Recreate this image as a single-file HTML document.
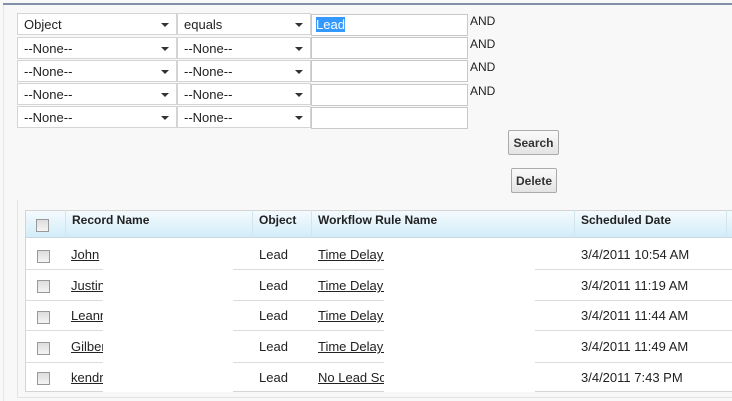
<!DOCTYPE html>
<html><head><style>
*{margin:0;padding:0;box-sizing:border-box}
body{width:732px;height:401px;background:#f8f8f8;font-family:"Liberation Sans",Arial,sans-serif;font-size:13px;color:#222;position:relative;overflow:hidden}
.a{position:absolute}
.sel{position:absolute;background:#fff;border:1px solid #d4d4d4;height:22px;padding:3px 0 0 6px;font-size:13px}
.sel:after{content:"";position:absolute;right:7px;top:9px;border-left:4px solid transparent;border-right:4px solid transparent;border-top:4px solid #333}
.inp{position:absolute;background:#fff;border:1px solid #c8c8c8;height:22px}
.and{position:absolute;left:470px;font-size:12px}
.btn{position:absolute;background:linear-gradient(#fafafa,#e4e4e4);border:1px solid #aaa;border-radius:2px;font-size:12px;font-weight:bold;color:#333;text-align:center;padding-top:5px}
.th{position:absolute;top:210px;height:28px;font-weight:bold;font-size:12px;padding:3px 0 0 6px;border-right:1px solid #d4e4ec}
.cb{position:absolute;width:13px;height:13px;border:1px solid #999;background:linear-gradient(#ddd,#f4f4f4)}
.c{position:absolute;font-size:13px}
.u{text-decoration:underline}
.ln{position:absolute;height:1px;background:#dcdcdc}
</style></head><body>
<div class="a" style="left:3px;top:3px;width:729px;height:2px;background:#8290a8"></div>
<div class="a" style="left:3px;top:5px;width:1px;height:396px;background:#e6e6e6"></div>

<div class="sel" style="left:17px;top:13px;width:160px">Object</div>
<div class="sel" style="left:177px;top:13px;width:134px">equals</div>
<div class="inp" style="left:311px;top:14px;width:157px"><span style="background:#3399ff;color:#fff;margin-left:4px;position:relative;top:2px">Lead</span></div>
<div class="and" style="top:14px">AND</div>

<div class="sel" style="left:17px;top:37px;width:160px">--None--</div>
<div class="sel" style="left:177px;top:37px;width:134px">--None--</div>
<div class="inp" style="left:311px;top:37px;width:157px"></div>
<div class="and" style="top:37px">AND</div>

<div class="sel" style="left:17px;top:60px;width:160px">--None--</div>
<div class="sel" style="left:177px;top:60px;width:134px">--None--</div>
<div class="inp" style="left:311px;top:60px;width:157px"></div>
<div class="and" style="top:60px">AND</div>

<div class="sel" style="left:17px;top:83px;width:160px">--None--</div>
<div class="sel" style="left:177px;top:83px;width:134px">--None--</div>
<div class="inp" style="left:311px;top:84px;width:157px"></div>
<div class="and" style="top:84px">AND</div>

<div class="sel" style="left:17px;top:106px;width:160px">--None--</div>
<div class="sel" style="left:177px;top:106px;width:134px">--None--</div>
<div class="inp" style="left:311px;top:107px;width:157px"></div>

<div class="btn" style="left:508px;top:130px;width:51px;height:25px">Search</div>
<div class="btn" style="left:511px;top:168px;width:46px;height:25px">Delete</div>

<div class="a" style="left:17px;top:200px;width:1px;height:198px;background:#e2e2e2"></div>
<div class="a" style="left:17px;top:397px;width:715px;height:1px;background:#e2e2e2"></div>

<div class="a" style="left:25px;top:210px;width:707px;height:182px;background:#fff;border:1px solid #d4d4d4;border-right:none"></div>
<div class="a" style="left:26px;top:211px;width:706px;height:27px;background:linear-gradient(#f4fbfe,#d2ecf8);border-bottom:1px solid #c8d8e0"></div>
<div class="th" style="left:26px;width:40px;"></div>
<div class="cb" style="left:36px;top:219px"></div>
<div class="th" style="left:66px;width:187px">Record Name</div>
<div class="th" style="left:253px;width:59px">Object</div>
<div class="th" style="left:312px;width:263px">Workflow Rule Name</div>
<div class="th" style="left:575px;width:152px">Scheduled Date</div>

<div class="ln" style="left:26px;top:269px;width:706px"></div>
<div class="ln" style="left:26px;top:300px;width:706px"></div>
<div class="ln" style="left:26px;top:330px;width:706px"></div>
<div class="ln" style="left:26px;top:362px;width:706px"></div>

<div class="cb" style="left:37px;top:250px"></div>
<div class="cb" style="left:37px;top:280px"></div>
<div class="cb" style="left:37px;top:311px"></div>
<div class="cb" style="left:37px;top:342px"></div>
<div class="cb" style="left:37px;top:372px"></div>

<div class="c u" style="left:71px;top:247px">John</div>
<div class="c u" style="left:71px;top:278px">Justin</div>
<div class="c u" style="left:71px;top:308px">Leanne</div>
<div class="c u" style="left:71px;top:339px">Gilbert</div>
<div class="c u" style="left:71px;top:370px">kendra</div>

<div class="c" style="left:259px;top:247px">Lead</div>
<div class="c" style="left:259px;top:278px">Lead</div>
<div class="c" style="left:259px;top:308px">Lead</div>
<div class="c" style="left:259px;top:339px">Lead</div>
<div class="c" style="left:259px;top:370px">Lead</div>

<div class="c u" style="left:318px;top:247px">Time Delay Rule</div>
<div class="c u" style="left:318px;top:278px">Time Delay Rule</div>
<div class="c u" style="left:318px;top:308px">Time Delay Rule</div>
<div class="c u" style="left:318px;top:339px">Time Delay Rule</div>
<div class="c u" style="left:318px;top:370px">No Lead Score Rule</div>

<div class="c" style="left:581px;top:247px">3/4/2011 10:54 AM</div>
<div class="c" style="left:581px;top:278px">3/4/2011 11:19 AM</div>
<div class="c" style="left:581px;top:308px">3/4/2011 11:44 AM</div>
<div class="c" style="left:581px;top:339px">3/4/2011 11:49 AM</div>
<div class="c" style="left:581px;top:370px">3/4/2011 7:43 PM</div>

<div class="a" style="left:103px;top:244px;width:130px;height:148px;background:#fff"></div>
<div class="a" style="left:384px;top:244px;width:151px;height:148px;background:#fff"></div>
<div class="a" style="left:233px;top:244px;width:20px;height:25px;background:#fff"></div>
</body></html>
